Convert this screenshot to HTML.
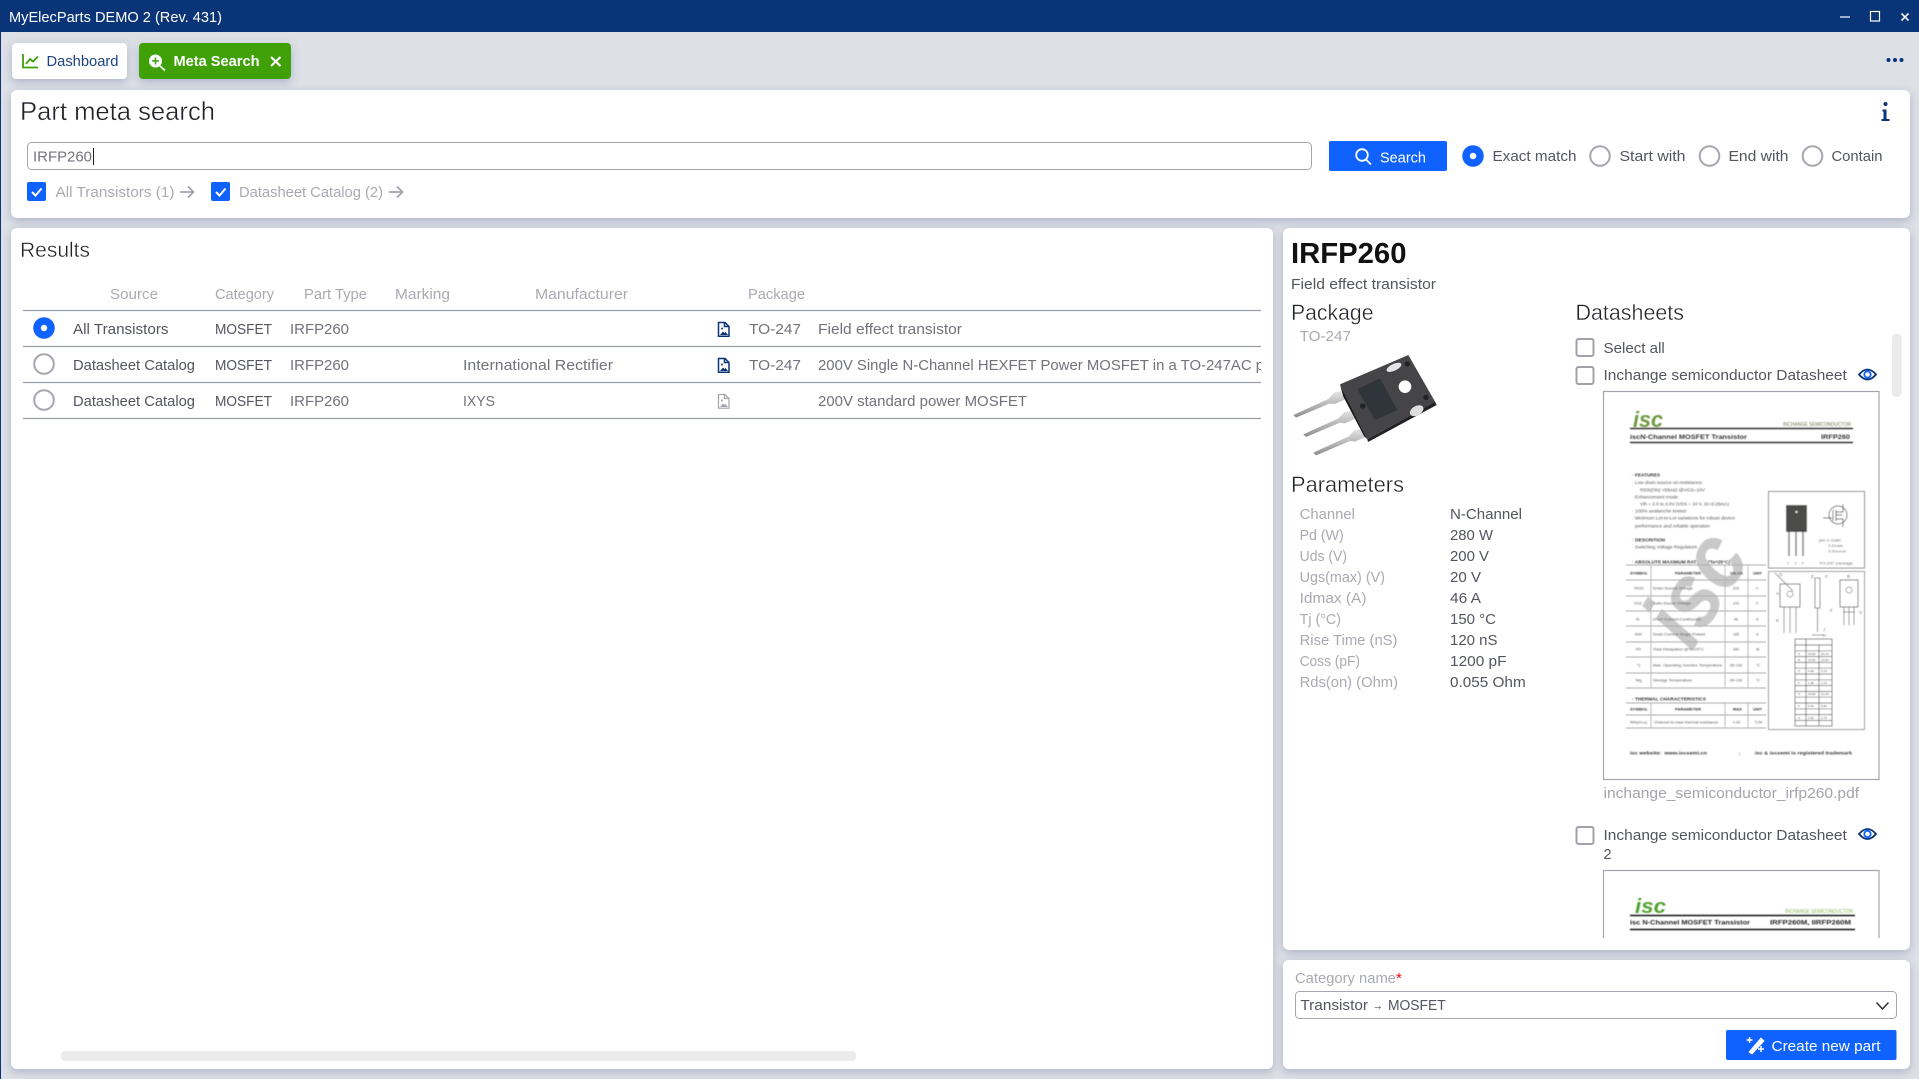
<!DOCTYPE html>
<html lang="en"><head><meta charset="utf-8"><title>MyElecParts</title>
<style>
html,body{margin:0;padding:0;width:1919px;height:1079px;overflow:hidden;background:#dde0e6}
.p{position:absolute;background:#fff;border-radius:6px;box-shadow:0 3px 9px rgba(70,80,130,.3)}
svg{position:absolute;left:0;top:0}
text{font-family:"Liberation Sans",sans-serif;font-size:14.8px;white-space:pre}
.h{fill:#a9aab3}.s{fill:#53555f}.m{fill:#71727c}.l{fill:#a3a4ad}
.t{fill:#22232a;stroke:#fff;stroke-width:.4px}
.k{fill:#555;font-size:3.6px}.b{font-weight:bold;fill:#333}
</style></head><body>
<div style="position:absolute;left:0;top:0;width:1px;height:1079px;background:#0a3478"></div>
<div class="p" style="left:12px;top:43px;width:115px;height:36px;border-radius:4px"></div>
<div class="p" style="left:139px;top:43px;width:152px;height:36px;border-radius:4px;background:#3fa008"></div>
<div class="p" style="left:11px;top:90px;width:1899px;height:128px"></div>
<div class="p" style="left:11px;top:228px;width:1262px;height:841px"></div>
<div class="p" style="left:1283px;top:228px;width:627px;height:722px"></div>
<div class="p" style="left:1283px;top:960px;width:627px;height:109px"></div>
<svg width="1919" height="1079" viewBox="0 0 1919 1079" xmlns="http://www.w3.org/2000/svg">
<defs>
<clipPath id="c1"><rect x="700" y="340" width="561" height="50"/></clipPath>
<clipPath id="c2"><rect x="1600" y="860" width="285" height="78"/></clipPath>
<filter id="bl" x="-5%" y="-5%" width="110%" height="110%"><feGaussianBlur stdDeviation=".42"/></filter>
<linearGradient id="lg" x1="0" y1="0" x2="0" y2="1"><stop offset="0" stop-color="#e6e6e6"/><stop offset="1" stop-color="#8d8d8d"/></linearGradient>
</defs>

<!-- title bar -->
<rect x="0" y="0" width="1919" height="32" fill="#0a3478"/>
<text x="9" y="22" fill="#fff" style="font-size:14.5px" textLength="213" lengthAdjust="spacingAndGlyphs">MyElecParts DEMO 2 (Rev. 431)</text>
<path d="M1840 17h10" stroke="#fff" stroke-width="1.2"/>
<rect x="1870.5" y="11.5" width="9" height="9.5" fill="none" stroke="#fff" stroke-width="1.2"/>
<path d="M1901.5 13.5l7 7m0-7l-7 7" stroke="#fff" stroke-width="1.6"/>

<!-- tabs -->
<path d="M23 54v13.5h15" fill="none" stroke="#3fa008" stroke-width="1.8"/>
<path d="M26 64l4-5 3 2.5 5-5" fill="none" stroke="#3fa008" stroke-width="1.8"/>
<text x="46.5" y="66" fill="#1c4384" textLength="72" lengthAdjust="spacingAndGlyphs">Dashboard</text>
<circle cx="155.5" cy="61" r="6.5" fill="#fff"/>
<path d="M160 66l5 4.5" stroke="#fff" stroke-width="1.8"/>
<path d="M155.5 57.5v7m-3.5-3.5h7" stroke="#3fa008" stroke-width="1.5"/>
<text x="173.5" y="66" fill="#fff" font-weight="bold" textLength="86" lengthAdjust="spacingAndGlyphs">Meta Search</text>
<path d="M271 57l9.5 9m0-9l-9.5 9" stroke="#fff" stroke-width="2.2"/>
<circle cx="1888.500" cy="60" r="2" fill="#0a3478"/><circle cx="1895" cy="60" r="2" fill="#0a3478"/><circle cx="1901.500" cy="60" r="2" fill="#0a3478"/>

<!-- search panel -->
<text x="20" y="120" class="t" style="font-size:26px" textLength="195" lengthAdjust="spacingAndGlyphs">Part meta search</text>
<circle cx="1885.500" cy="104" r="2" fill="#0a3478"/>
<path d="M1882.500 109.500h4v9.500h3v2h-8v-2h2v-7.500h-1z" fill="#0a3478"/>
<rect x="27.500" y="142.500" width="1284" height="27" rx="4" fill="#fff" stroke="#a5a6b0" stroke-width="1"/>
<text x="33" y="161.500" class="m" textLength="59" lengthAdjust="spacingAndGlyphs">IRFP260</text>
<path d="M93.500 148v17" stroke="#222" stroke-width="1"/>
<rect x="27" y="182" width="19" height="19" rx="2" fill="#0f62fe"/>
<path d="M32 192l3.500 3.500 6-7" fill="none" stroke="#fff" stroke-width="2"/>
<text x="55.500" y="197" class="h" textLength="119" lengthAdjust="spacingAndGlyphs">All Transistors (1)</text>
<path d="M180 192h13m-5-5.500l5.500 5.500-5.500 5.500" fill="none" stroke="#a3a4ad" stroke-width="1.800"/>
<rect x="211" y="182" width="19" height="19" rx="2" fill="#0f62fe"/>
<path d="M216 192l3.500 3.500 6-7" fill="none" stroke="#fff" stroke-width="2"/>
<text x="239" y="197" class="h" textLength="144" lengthAdjust="spacingAndGlyphs">Datasheet Catalog (2)</text>
<path d="M389 192h13m-5-5.500l5.500 5.500-5.500 5.500" fill="none" stroke="#a3a4ad" stroke-width="1.800"/>

<rect x="1329" y="141" width="118" height="30" rx="2" fill="#0f62fe"/>
<circle cx="1362" cy="155" r="5.800" fill="none" stroke="#fff" stroke-width="1.800"/>
<path d="M1366 159.500l5 5" stroke="#fff" stroke-width="1.800"/>
<text x="1380" y="162.500" fill="#fff" textLength="46" lengthAdjust="spacingAndGlyphs">Search</text>

<circle cx="1473" cy="156" r="7" fill="#fff" stroke="#0f62fe" stroke-width="7.500"/>
<text x="1492.500" y="161" class="s" textLength="84" lengthAdjust="spacingAndGlyphs">Exact match</text>
<circle cx="1600" cy="156" r="9.800" fill="#fff" stroke="#a5a6b0" stroke-width="2"/>
<text x="1619.500" y="161" class="s" textLength="66" lengthAdjust="spacingAndGlyphs">Start with</text>
<circle cx="1709.500" cy="156" r="9.800" fill="#fff" stroke="#a5a6b0" stroke-width="2"/>
<text x="1728.500" y="161" class="s" textLength="60" lengthAdjust="spacingAndGlyphs">End with</text>
<circle cx="1812.500" cy="156" r="9.800" fill="#fff" stroke="#a5a6b0" stroke-width="2"/>
<text x="1831.500" y="161" class="s" textLength="51" lengthAdjust="spacingAndGlyphs">Contain</text>

<!-- results -->
<text x="20" y="257" class="t" style="font-size:21px" textLength="70" lengthAdjust="spacingAndGlyphs">Results</text>
<text x="110" y="299" class="h" textLength="48" lengthAdjust="spacingAndGlyphs">Source</text>
<text x="215" y="299" class="h" textLength="59" lengthAdjust="spacingAndGlyphs">Category</text>
<text x="304" y="299" class="h" textLength="63" lengthAdjust="spacingAndGlyphs">Part Type</text>
<text x="395" y="299" class="h" textLength="55" lengthAdjust="spacingAndGlyphs">Marking</text>
<text x="535" y="299" class="h" textLength="93" lengthAdjust="spacingAndGlyphs">Manufacturer</text>
<text x="748" y="299" class="h" textLength="57" lengthAdjust="spacingAndGlyphs">Package</text>
<path d="M23 310.500h1238M23 346.500h1238M23 382.500h1238M23 418.500h1238" stroke="#9b9ea9" stroke-width="1.200"/>

<circle cx="44" cy="328" r="7" fill="#fff" stroke="#0f62fe" stroke-width="7.500"/>
<circle cx="44" cy="364" r="9.800" fill="#fff" stroke="#a5a6b0" stroke-width="2"/>
<circle cx="44" cy="400" r="9.800" fill="#fff" stroke="#a5a6b0" stroke-width="2"/>

<text x="73" y="334" class="s" textLength="95.500" lengthAdjust="spacingAndGlyphs">All Transistors</text>
<text x="215" y="334" class="s" textLength="57" lengthAdjust="spacingAndGlyphs">MOSFET</text>
<text x="290" y="334" class="m" textLength="59" lengthAdjust="spacingAndGlyphs">IRFP260</text>
<text x="749" y="334" class="m" textLength="52" lengthAdjust="spacingAndGlyphs">TO-247</text>
<text x="818" y="334" class="m" textLength="144" lengthAdjust="spacingAndGlyphs">Field effect transistor</text>

<text x="73" y="370" class="s" textLength="122" lengthAdjust="spacingAndGlyphs">Datasheet Catalog</text>
<text x="215" y="370" class="s" textLength="57" lengthAdjust="spacingAndGlyphs">MOSFET</text>
<text x="290" y="370" class="m" textLength="59" lengthAdjust="spacingAndGlyphs">IRFP260</text>
<text x="463" y="370" class="m" textLength="150" lengthAdjust="spacingAndGlyphs">International Rectifier</text>
<text x="749" y="370" class="m" textLength="52" lengthAdjust="spacingAndGlyphs">TO-247</text>
<g clip-path="url(#c1)"><text x="818" y="370" class="m" textLength="446" lengthAdjust="spacingAndGlyphs">200V Single N-Channel HEXFET Power MOSFET in a TO-247AC p</text></g>

<text x="73" y="406" class="s" textLength="122" lengthAdjust="spacingAndGlyphs">Datasheet Catalog</text>
<text x="215" y="406" class="s" textLength="57" lengthAdjust="spacingAndGlyphs">MOSFET</text>
<text x="290" y="406" class="m" textLength="59" lengthAdjust="spacingAndGlyphs">IRFP260</text>
<text x="463" y="406" class="m" textLength="32" lengthAdjust="spacingAndGlyphs">IXYS</text>
<text x="818" y="406" class="m" textLength="209" lengthAdjust="spacingAndGlyphs">200V standard power MOSFET</text>

<g fill="none" stroke="#0a3478" stroke-width="1.500">
<path d="M718.500 322.500h6.500l4 4v9.700h-10.500z"/><path d="M724.500 322.500v4h4.500"/>
<path d="M718.500 358.500h6.500l4 4v9.700h-10.500z"/><path d="M724.500 358.500v4h4.500"/>
</g>
<path d="M720 335l3-3.500 1.500 1.500 1-1 2.500 3z" fill="#0a3478"/><circle cx="722" cy="328.500" r="1" fill="#0a3478"/>
<path d="M720 371l3-3.500 1.500 1.500 1-1 2.500 3z" fill="#0a3478"/><circle cx="722" cy="364.500" r="1" fill="#0a3478"/>
<path d="M718.500 394.500h6.500l4 4v9.700h-10.500z" fill="none" stroke="#a3a4ad" stroke-width="1.200"/>
<path d="M724.500 394.500v4h4.500" fill="none" stroke="#a3a4ad" stroke-width="1.200"/>
<path d="M720 407l3-3.500 1.500 1.500 1-1 2.500 3z" fill="#a3a4ad"/><circle cx="722" cy="400.500" r="1" fill="#a3a4ad"/>

<rect x="61" y="1051" width="795" height="10" rx="4" fill="#ebebeb"/>

<!-- detail -->
<text x="1291" y="263" style="font-size:29px;font-weight:bold;fill:#111" textLength="115.500" lengthAdjust="spacingAndGlyphs">IRFP260</text>
<text x="1291" y="289" class="s" textLength="145" lengthAdjust="spacingAndGlyphs">Field effect transistor</text>
<text x="1291" y="320" class="t" style="font-size:22.500px" textLength="82.500" lengthAdjust="spacingAndGlyphs">Package</text>
<text x="1575.500" y="320" class="t" style="font-size:22.500px" textLength="108.500" lengthAdjust="spacingAndGlyphs">Datasheets</text>
<text x="1299.600" y="341" class="h" textLength="51.400" lengthAdjust="spacingAndGlyphs">TO-247</text>

<!-- transistor -->
<g transform="translate(1280 340) scale(.33333)" filter="url(#bl)">
<polygon points="40,225 145,177 163,158 190,152 200,176 165,192 150,190 48,233" fill="url(#lg)"/>
<polygon points="70,283 175,235 193,216 220,210 230,234 195,250 180,248 78,291" fill="url(#lg)"/>
<polygon points="100,338 205,290 223,271 250,265 260,289 225,305 210,303 108,346" fill="url(#lg)"/>
<polygon points="180,133 385,45 465,185 262,298" fill="#454446"/>
<polygon points="180,133 262,298 252,288 190,170" fill="#1f1e1f"/>
<polygon points="262,298 465,185 470,195 264,306" fill="#242325"/>
<polygon points="232,148 300,115 352,210 285,240" fill="#2f353b"/>
<circle cx="375" cy="140" r="19" fill="#fff"/>
<ellipse cx="342" cy="82" rx="24" ry="10" transform="rotate(-25 342 82)" fill="#e4e4e4"/>
<ellipse cx="410" cy="212" rx="22" ry="14" transform="rotate(-30 410 212)" fill="#ddd"/>
<circle cx="382" cy="72" r="8" fill="#242325"/><circle cx="438" cy="172" r="8" fill="#242325"/><circle cx="248" cy="198" r="8" fill="#242325"/>
</g>

<text x="1291" y="492" class="t" style="font-size:22.500px" textLength="113" lengthAdjust="spacingAndGlyphs">Parameters</text>
<text x="1299.600" y="519" class="h" textLength="55.400" lengthAdjust="spacingAndGlyphs">Channel</text>
<text x="1299.600" y="540" class="h" textLength="44.100" lengthAdjust="spacingAndGlyphs">Pd (W)</text>
<text x="1299.600" y="561" class="h" textLength="47.400" lengthAdjust="spacingAndGlyphs">Uds (V)</text>
<text x="1299.600" y="582" class="h" textLength="85.400" lengthAdjust="spacingAndGlyphs">Ugs(max) (V)</text>
<text x="1299.600" y="603" class="h" textLength="66.900" lengthAdjust="spacingAndGlyphs">Idmax (A)</text>
<text x="1299.600" y="624" class="h" textLength="41.400" lengthAdjust="spacingAndGlyphs">Tj (°C)</text>
<text x="1299.600" y="645" class="h" textLength="97.900" lengthAdjust="spacingAndGlyphs">Rise Time (nS)</text>
<text x="1299.600" y="666" class="h" textLength="60.400" lengthAdjust="spacingAndGlyphs">Coss (pF)</text>
<text x="1299.600" y="687" class="h" textLength="98.400" lengthAdjust="spacingAndGlyphs">Rds(on) (Ohm)</text>
<text x="1450" y="519" class="s" textLength="72" lengthAdjust="spacingAndGlyphs">N-Channel</text>
<text x="1450" y="540" class="s" textLength="43" lengthAdjust="spacingAndGlyphs">280 W</text>
<text x="1450" y="561" class="s" textLength="39" lengthAdjust="spacingAndGlyphs">200 V</text>
<text x="1450" y="582" class="s" textLength="31" lengthAdjust="spacingAndGlyphs">20 V</text>
<text x="1450" y="603" class="s" textLength="31" lengthAdjust="spacingAndGlyphs">46 A</text>
<text x="1450" y="624" class="s" textLength="46" lengthAdjust="spacingAndGlyphs">150 °C</text>
<text x="1450" y="645" class="s" textLength="47.500" lengthAdjust="spacingAndGlyphs">120 nS</text>
<text x="1450" y="666" class="s" textLength="56.500" lengthAdjust="spacingAndGlyphs">1200 pF</text>
<text x="1450" y="687" class="s" textLength="75.700" lengthAdjust="spacingAndGlyphs">0.055 Ohm</text>

<!-- datasheets -->
<rect x="1576.500" y="339" width="17" height="17" rx="2" fill="#fff" stroke="#a0a1ab" stroke-width="2"/>
<text x="1603.500" y="353" class="s" textLength="61.300" lengthAdjust="spacingAndGlyphs">Select all</text>
<rect x="1576.500" y="367" width="17" height="17" rx="2" fill="#fff" stroke="#a0a1ab" stroke-width="2"/>
<text x="1603.500" y="380" class="s" textLength="243.300" lengthAdjust="spacingAndGlyphs">Inchange semiconductor Datasheet</text>
<path d="M1859 374.500Q1867.500 364.500 1876 374.500Q1867.500 384.500 1859 374.500z" fill="none" stroke="#0a3478" stroke-width="1.800"/>
<circle cx="1867.500" cy="374.500" r="3.200" fill="none" stroke="#0f62fe" stroke-width="1.800"/>
<rect x="1892" y="334" width="9.600" height="63" rx="4" fill="#ebebeb"/>

<rect x="1603.500" y="391.500" width="275.500" height="388" fill="#fff" stroke="#a3a4ae" stroke-width="1.200"/>
<g filter="url(#bl)">
<text x="1633" y="427" style="font-size:22px;font-weight:bold;font-style:italic;fill:#6f9a42" textLength="30" lengthAdjust="spacingAndGlyphs">isc</text>
<text x="1783" y="426" style="font-size:5px;fill:#6c7b53" textLength="68" lengthAdjust="spacingAndGlyphs">INCHANGE SEMICONDUCTOR</text>
<path d="M1630 428.500h223M1630 442.500h223" stroke="#333" stroke-width="1.400"/>
<text x="1630" y="439" class="b" style="font-size:6.500px" textLength="117" lengthAdjust="spacingAndGlyphs">iscN-Channel MOSFET Transistor</text>
<text x="1821" y="439" class="b" style="font-size:6.500px" textLength="29" lengthAdjust="spacingAndGlyphs">IRFP260</text>

<g>
<text x="1632" y="476.500" class="b" style="font-size:4.500px" textLength="28" lengthAdjust="spacingAndGlyphs">· FEATURES</text>
<text x="1632" y="484" style="font-size:4.200px" fill="#555" textLength="71" lengthAdjust="spacingAndGlyphs">· Low drain-source on-resistance:</text>
<text x="1640" y="491.500" style="font-size:4.200px" fill="#555" textLength="65" lengthAdjust="spacingAndGlyphs">RDS(ON) &lt;55mΩ @VGS=10V</text>
<text x="1632" y="498.500" style="font-size:4.200px" fill="#555" textLength="47" lengthAdjust="spacingAndGlyphs">· Enhancement mode:</text>
<text x="1640" y="505.500" style="font-size:4.200px" fill="#555" textLength="89" lengthAdjust="spacingAndGlyphs">Vth = 2.0 to 4.0V (VDS = 10 V, ID=0.25mA)</text>
<text x="1632" y="512.500" style="font-size:4.200px" fill="#555" textLength="54" lengthAdjust="spacingAndGlyphs">· 100% avalanche tested</text>
<text x="1632" y="519.500" style="font-size:4.200px" fill="#555" textLength="103" lengthAdjust="spacingAndGlyphs">· Minimum Lot-to-Lot variations for robust device</text>
<text x="1635" y="527.500" style="font-size:4.200px" fill="#555" textLength="75" lengthAdjust="spacingAndGlyphs">performance and reliable operation</text>
<text x="1632" y="541.500" class="b" style="font-size:4.500px" textLength="33" lengthAdjust="spacingAndGlyphs">· DESCRITION</text>
<text x="1632" y="548.500" style="font-size:4.200px" fill="#555" textLength="65" lengthAdjust="spacingAndGlyphs">· Switching Voltage Regulators</text>
<text x="1632" y="563.500" class="b" style="font-size:4.500px" textLength="98" lengthAdjust="spacingAndGlyphs">· ABSOLUTE MAXIMUM RATINGS(Ta=25°C)</text>
</g>

<!-- watermark -->
<text transform="translate(1692 652) rotate(-58)" style="font-size:92px;font-weight:bold;font-style:italic;fill:#c9c9c9" textLength="112" lengthAdjust="spacingAndGlyphs">isc</text>

<!-- ratings table -->
<path d="M1626 565h140M1626 580h140M1626 596h140M1626 611h140M1626 626h140M1626 642h140M1626 657h140M1626 673h140M1626 688h140" stroke="#aaa" stroke-width=".9"/>
<path d="M1651 565v123M1725 565v123M1748 565v123" stroke="#b4b4b4" stroke-width=".9"/>
<g>
<text x="1630" y="574.500" class="b" style="font-size:3.800px" textLength="18" lengthAdjust="spacingAndGlyphs">SYMBOL</text>
<text x="1675" y="574.500" class="b" style="font-size:3.800px" textLength="26" lengthAdjust="spacingAndGlyphs">PARAMETER</text>
<text x="1730" y="574.500" class="b" style="font-size:3.800px" textLength="13" lengthAdjust="spacingAndGlyphs">VALUE</text>
<text x="1753" y="574.500" class="b" style="font-size:3.800px" textLength="9" lengthAdjust="spacingAndGlyphs">UNIT</text>
<text x="1653" y="589.500" class="k" textLength="40" lengthAdjust="spacingAndGlyphs">Drain-Source Voltage</text>
<text x="1653" y="604.500" class="k" textLength="38" lengthAdjust="spacingAndGlyphs">Gate-Source Voltage</text>
<text x="1653" y="620.500" class="k" textLength="48" lengthAdjust="spacingAndGlyphs">Drain Current-Continuous</text>
<text x="1653" y="635.500" class="k" textLength="52" lengthAdjust="spacingAndGlyphs">Drain Current-Single Pulsed</text>
<text x="1653" y="650.500" class="k" textLength="51" lengthAdjust="spacingAndGlyphs">Total Dissipation @Tc=25°C</text>
<text x="1653" y="666.500" class="k" textLength="69" lengthAdjust="spacingAndGlyphs">Max. Operating Junction Temperature</text>
<text x="1653" y="681.500" class="k" textLength="39" lengthAdjust="spacingAndGlyphs">Storage Temperature</text>
<text x="1634" y="589.500" class="k">VDSS</text><text x="1634" y="604.500" class="k">VGS</text><text x="1636" y="620.500" class="k">ID</text><text x="1635" y="635.500" class="k">IDM</text><text x="1636" y="650.500" class="k">PD</text><text x="1637" y="666.500" class="k">Tj</text><text x="1635" y="681.500" class="k">Tstg</text>
<text x="1733" y="589.500" class="k">200</text><text x="1733" y="604.500" class="k">±20</text><text x="1734" y="620.500" class="k">46</text><text x="1733" y="635.500" class="k">185</text><text x="1733" y="650.500" class="k">280</text><text x="1729" y="666.500" class="k">-55~150</text><text x="1729" y="681.500" class="k">-55~150</text>
<text x="1756" y="589.500" class="k">V</text><text x="1756" y="604.500" class="k">V</text><text x="1756" y="620.500" class="k">A</text><text x="1756" y="635.500" class="k">A</text><text x="1756" y="650.500" class="k">W</text><text x="1756" y="666.500" class="k">°C</text><text x="1756" y="681.500" class="k">°C</text>
</g>
<text x="1632" y="700.500" class="b" style="font-size:4.500px" textLength="74" lengthAdjust="spacingAndGlyphs">· THERMAL CHARACTERISTICS</text>
<path d="M1626 703h140M1626 715h140M1626 728h140" stroke="#aaa" stroke-width=".9"/>
<path d="M1651 703v25M1725 703v25M1748 703v25" stroke="#b4b4b4" stroke-width=".9"/>
<text x="1630" y="710.500" class="b" style="font-size:3.800px" textLength="18" lengthAdjust="spacingAndGlyphs">SYMBOL</text>
<text x="1675" y="710.500" class="b" style="font-size:3.800px" textLength="26" lengthAdjust="spacingAndGlyphs">PARAMETER</text>
<text x="1733" y="710.500" class="b" style="font-size:3.800px" textLength="9" lengthAdjust="spacingAndGlyphs">MAX</text>
<text x="1753" y="710.500" class="b" style="font-size:3.800px" textLength="9" lengthAdjust="spacingAndGlyphs">UNIT</text>
<text x="1630" y="723.500" class="k" textLength="17" lengthAdjust="spacingAndGlyphs">Rth(ch-c)</text>
<text x="1654" y="723.500" class="k" textLength="64" lengthAdjust="spacingAndGlyphs">Channel-to-case thermal resistance</text>
<text x="1733" y="723.500" class="k">0.45</text><text x="1754" y="723.500" class="k">°C/W</text>

<text x="1630" y="754.500" class="b" style="font-size:4.800px" textLength="77" lengthAdjust="spacingAndGlyphs">isc website:  www.iscsemi.cn</text>
<text x="1739" y="754.500" class="k">|</text>
<text x="1755" y="754.500" class="b" style="font-size:4.800px" textLength="97" lengthAdjust="spacingAndGlyphs">isc &amp; iscsemi is registered trademark</text>

<!-- right boxes -->
<rect x="1768.500" y="491.500" width="96" height="76.500" fill="#fff" stroke="#888" stroke-width="1"/>
<rect x="1768.500" y="571.500" width="96" height="158" fill="#fff" stroke="#999" stroke-width="1"/>
<rect x="1786" y="505" width="21" height="27" fill="#4c4b49"/>
<circle cx="1796.500" cy="512" r="1.200" fill="#ddd"/>
<path d="M1789 532v24M1796 532v24M1803 532v24" stroke="#888" stroke-width="1.600"/>
<text x="1787" y="564.500" class="k">1</text><text x="1794.500" y="564.500" class="k">2</text><text x="1801.500" y="564.500" class="k">3</text>
<circle cx="1838" cy="515" r="9" fill="none" stroke="#666" stroke-width=".9"/>
<path d="M1823 518h9M1833 510v11M1836 510v11M1836 512h7v-8M1836 519h7v8M1836 515h6" fill="none" stroke="#555" stroke-width=".9"/>
<text x="1819" y="541.500" class="k" textLength="22" lengthAdjust="spacingAndGlyphs">pin 1.Gate</text>
<text x="1828" y="547" class="k" textLength="15" lengthAdjust="spacingAndGlyphs">2.Drain</text>
<text x="1828" y="552.500" class="k" textLength="18" lengthAdjust="spacingAndGlyphs">3.Source</text>
<text x="1819" y="564.500" class="k" textLength="34" lengthAdjust="spacingAndGlyphs">TO-247 package</text>
<!-- drawing -->
<rect x="1780" y="584" width="20" height="23" fill="#fff" stroke="#666" stroke-width=".9"/>
<circle cx="1790" cy="594" r="3" fill="none" stroke="#777" stroke-width=".7"/>
<path d="M1784 607v26M1790 607v26M1796 607v26M1775 573l18 18" stroke="#777" stroke-width=".8"/>
<rect x="1815" y="578" width="5" height="30" fill="#fff" stroke="#666" stroke-width=".8"/>
<path d="M1817.500 608v24M1812 635h12" stroke="#666" stroke-width=".8"/>
<rect x="1840" y="580" width="18" height="27" fill="#fff" stroke="#666" stroke-width=".9"/>
<circle cx="1849" cy="590" r="3" fill="none" stroke="#777" stroke-width=".7"/>
<path d="M1844 607v18M1849 607v18M1854 607v18M1843 612h12" stroke="#777" stroke-width=".8"/>
<text x="1811" y="578" class="k" style="font-size:4.500px">E</text><text x="1825" y="578" class="k" style="font-size:4.500px">C</text><text x="1847" y="578" class="k" style="font-size:4.500px">B</text>
<text x="1779" y="576" class="k" style="font-size:4.500px">G</text><text x="1776" y="595" class="k" style="font-size:4.500px">A</text><text x="1776" y="622" class="k" style="font-size:4.500px">K</text>
<text x="1830" y="612" class="k" style="font-size:4.500px">F</text><text x="1859" y="614" class="k" style="font-size:4.500px">V</text>
<text x="1823" y="631" class="k" style="font-size:4.500px">J</text><text x="1823" y="637" class="k" style="font-size:4.500px">H</text>
<!-- dim table -->
<path d="M1795 639h37v87h-37zM1795 645h37M1795 650.800h37M1795 656.600h37M1795 662.400h37M1795 668.200h37M1795 674h37M1795 679.800h37M1795 685.600h37M1795 691.400h37M1795 697.200h37M1795 703h37M1795 708.800h37M1795 714.600h37M1795 720.400h37M1806 639v87M1819 645v81" fill="none" stroke="#444" stroke-width=".7"/>
<g>
<text x="1798" y="655" style="font-size:3px" fill="#333">A</text><text x="1808" y="655" style="font-size:3px" fill="#333">19.90</text><text x="1821" y="655" style="font-size:3px" fill="#333">20.10</text>
<text x="1798" y="661" style="font-size:3px" fill="#333">B</text><text x="1808" y="661" style="font-size:3px" fill="#333">15.60</text><text x="1821" y="661" style="font-size:3px" fill="#333">15.80</text>
<text x="1798" y="672" style="font-size:3px" fill="#333">D</text><text x="1808" y="672" style="font-size:3px" fill="#333">4.90</text><text x="1821" y="672" style="font-size:3px" fill="#333">5.10</text>
<text x="1798" y="684" style="font-size:3px" fill="#333">F</text><text x="1808" y="684" style="font-size:3px" fill="#333">1.90</text><text x="1821" y="684" style="font-size:3px" fill="#333">2.10</text>
<text x="1798" y="695" style="font-size:3px" fill="#333">H</text><text x="1808" y="695" style="font-size:3px" fill="#333">20.80</text><text x="1821" y="695" style="font-size:3px" fill="#333">21.00</text>
<text x="1798" y="707" style="font-size:3px" fill="#333">K</text><text x="1808" y="707" style="font-size:3px" fill="#333">5.40</text><text x="1821" y="707" style="font-size:3px" fill="#333">5.60</text>
<text x="1798" y="719" style="font-size:3px" fill="#333">N</text><text x="1808" y="719" style="font-size:3px" fill="#333">3.50</text><text x="1821" y="719" style="font-size:3px" fill="#333">3.70</text>
</g>
</g>

<text x="1603.500" y="798" class="l" textLength="255.600" lengthAdjust="spacingAndGlyphs">inchange_semiconductor_irfp260.pdf</text>

<!-- datasheet 2 -->
<rect x="1576.500" y="827" width="17" height="17" rx="2" fill="#fff" stroke="#a0a1ab" stroke-width="2"/>
<text x="1603.500" y="840" class="s" textLength="243.300" lengthAdjust="spacingAndGlyphs">Inchange semiconductor Datasheet</text>
<text x="1603.500" y="859" class="s" textLength="8" lengthAdjust="spacingAndGlyphs">2</text>
<path d="M1859 834Q1867.500 824 1876 834Q1867.500 844 1859 834z" fill="none" stroke="#0a3478" stroke-width="1.800"/>
<circle cx="1867.500" cy="834" r="3.200" fill="none" stroke="#0f62fe" stroke-width="1.800"/>
<g clip-path="url(#c2)">
<rect x="1603.500" y="870.500" width="275.500" height="120" fill="#fff" stroke="#a3a4ae" stroke-width="1.200"/>
<g filter="url(#bl)">
<text x="1635" y="913" style="font-size:20px;font-weight:bold;font-style:italic;fill:#53a132" textLength="31" lengthAdjust="spacingAndGlyphs">isc</text>
<text x="1785" y="913" style="font-size:5px;fill:#8cb856" textLength="68" lengthAdjust="spacingAndGlyphs">INCHANGE SEMICONDUCTOR</text>
<path d="M1630 915.500h225M1630 929.500h225" stroke="#111" stroke-width="1.500"/>
<text x="1630" y="924.500" class="b" style="font-size:6.500px;fill:#222" textLength="120" lengthAdjust="spacingAndGlyphs">isc N-Channel MOSFET Transistor</text>
<text x="1770" y="924.500" class="b" style="font-size:6.500px;fill:#222" textLength="81" lengthAdjust="spacingAndGlyphs">IRFP260M, IIRFP260M</text>
</g>
</g>

<!-- bottom -->
<text x="1295" y="983" class="h" textLength="101" lengthAdjust="spacingAndGlyphs">Category name</text>
<text x="1396" y="983" fill="#f00" style="font-size:15px">*</text>
<rect x="1295.500" y="991.500" width="601" height="27" rx="4" fill="#fff" stroke="#a5a6b0" stroke-width="1"/>
<text x="1300.400" y="1010" class="s" textLength="67.600" lengthAdjust="spacingAndGlyphs">Transistor</text>
<text x="1372.500" y="1010" class="s" textLength="10.500" lengthAdjust="spacingAndGlyphs">→</text>
<text x="1388" y="1010" class="s" textLength="57.700" lengthAdjust="spacingAndGlyphs">MOSFET</text>
<path d="M1876.500 1002.500l6 6.500 6-6.500" fill="none" stroke="#333" stroke-width="1.500"/>
<rect x="1726" y="1030" width="170.500" height="30" rx="2" fill="#0f62fe"/>
<path d="M1749 1052l12-14 3 3-12 13z" fill="#fff" stroke="#fff" stroke-width=".8"/>
<path d="M1749.500 1037v6M1746.500 1040h6M1761 1046v6M1758 1049h6" stroke="#fff" stroke-width="1.500"/>
<text x="1771.500" y="1051" fill="#fff" textLength="109" lengthAdjust="spacingAndGlyphs">Create new part</text>
</svg>
</body></html>
